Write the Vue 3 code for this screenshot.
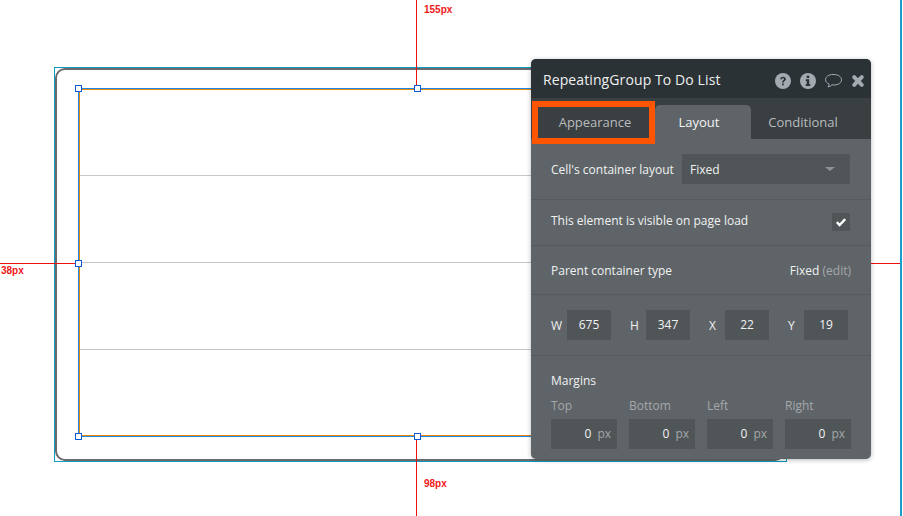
<script setup>
const sizes = [
  { k: 'W', v: '675' },
  { k: 'H', v: '347' },
  { k: 'X', v: '22' },
  { k: 'Y', v: '19' },
]
const margins = ['Top', 'Bottom', 'Left', 'Right']
const handles = [
  [75, 85], [414, 85], [75, 260], [75, 433], [414, 433],
]
const rowLines = [175, 262, 349]
</script>

<template>
  <div class="canvas">
    <div class="bounds"></div>
    <div class="group"></div>
    <div class="selection"></div>
    <div v-for="y in rowLines" :key="y" class="rowline" :style="{ top: y + 'px' }"></div>

    <div class="guide g-top"></div>
    <div class="guide g-bottom"></div>
    <div class="guide g-left"></div>
    <div class="guide g-right"></div>
    <div class="edge"></div>
    <span class="dist d-top">155px</span>
    <span class="dist d-bottom">98px</span>
    <span class="dist d-left">38px</span>

    <div
      v-for="h in handles"
      :key="h.join()"
      class="handle"
      :style="{ left: h[0] + 'px', top: h[1] + 'px' }"
    ></div>

    <section class="panel">
      <header class="head">
        <span class="title">RepeatingGroup To Do List</span>
        <div class="icons">
          <svg width="16" height="16" viewBox="0 0 16 16">
            <circle cx="8" cy="8" r="8" fill="#a3abb0" />
            <path d="M5.2 6.2C5.3 4.6 6.5 3.7 8 3.7c1.6 0 2.9 1 2.9 2.4 0 1.2-.8 1.7-1.5 2.2-.5.3-.7.6-.7 1.2H7.1c0-1.2.4-1.8 1.1-2.3.6-.4.9-.7.9-1.1 0-.5-.5-.8-1.1-.8-.7 0-1.1.4-1.2 1H5.200z" fill="#2b3235" />
            <rect x="7.100" y="10.500" width="1.700" height="1.800" fill="#2b3235" />
          </svg>
          <svg width="16" height="16" viewBox="0 0 16 16">
            <circle cx="8" cy="8" r="8" fill="#a3abb0" />
            <rect x="6.700" y="2.700" width="2.500" height="2.300" fill="#2b3235" />
            <path d="M5.700 6.200h3.500v5h1.100v1.700H5.700v-1.700h1v-3.300h-1z" fill="#2b3235" />
          </svg>
          <svg class="bubble" width="18" height="16" viewBox="0 0 18 16">
            <path d="M9 1.500c4.300 0 7.500 2.400 7.500 5.300S13.300 12 9 12c-.7 0-1.400-.1-2-.2-1 1.100-2.400 1.900-4 2.200.7-.9 1.100-1.800 1.200-2.900-2.200-.9-3.700-2.500-3.700-4.300 0-2.900 3.200-5.300 7.500-5.300z" fill="none" stroke="#a3abb0" stroke-width="1" />
          </svg>
          <svg width="14" height="14" viewBox="0 0 14 14">
            <path d="M3.200 3.200l7.600 7.600M10.800 3.200l-7.600 7.600" stroke="#a3abb0" stroke-width="4" stroke-linecap="round" fill="none" />
          </svg>
        </div>
      </header>

      <nav class="tabs">
        <div class="tab t-appearance">Appearance</div>
        <div class="tab active">Layout</div>
        <div class="tab t-conditional">Conditional</div>
      </nav>

      <div class="row r-layout">
        <span>Cell's container layout</span>
        <div class="select">
          <span class="select-text">Fixed</span>
          <i class="caret"></i>
        </div>
      </div>

      <div class="row r-visible">
        <span class="visible-text">This element is visible on page load</span>
        <div class="check">
          <svg width="12" height="10" viewBox="0 0 12 10">
            <path d="M1.800 5.200l2.800 2.800 5.600-5.800" fill="none" stroke="#fff" stroke-width="2.400" />
          </svg>
        </div>
      </div>

      <div class="row r-parent">
        <span>Parent container type</span>
        <span>Fixed <em>(edit)</em></span>
      </div>

      <div class="row r-size">
        <div v-for="s in sizes" :key="s.k" class="size">
          <label>{{ s.k }}</label>
          <div class="box">{{ s.v }}</div>
        </div>
      </div>

      <div class="margins">
        <div class="m-title">Margins</div>
        <div class="m-grid">
          <div v-for="m in margins" :key="m" class="m-cell">
            <div class="m-label">{{ m }}</div>
            <div class="m-box">0 <em>px</em></div>
          </div>
        </div>
      </div>
    </section>

    <div class="highlight"></div>
  </div>
</template>

<style>
html, body { margin: 0; background: #fff; }
</style>

<style scoped>
.canvas {
  position: relative;
  width: 903px;
  height: 516px;
  overflow: hidden;
  background: #fff;
  font-family: "Open Sans", sans-serif;
}
.bounds {
  position: absolute;
  left: 54px;
  top: 67px;
  width: 731px;
  height: 393px;
  border: 1px solid #0e9bc4;
}
.group {
  position: absolute;
  left: 55px;
  top: 68px;
  width: 726px;
  height: 389px;
  border: 2px solid #6b6b6b;
  border-radius: 10px;
}
.selection {
  position: absolute;
  left: 78px;
  top: 88px;
  width: 680px;
  height: 347px;
  border: 1px solid #1e88e5;
  box-shadow: inset 0 0 0 1px #e8890c;
}
.rowline {
  position: absolute;
  left: 80px;
  width: 460px;
  height: 1px;
  background: #c6c6c6;
}
.guide { position: absolute; background: #e81010; }
.g-top { left: 416px; top: 0; width: 1px; height: 86px; }
.g-bottom { left: 416px; top: 439px; width: 1px; height: 77px; }
.g-left { left: 0; top: 263px; width: 76px; height: 1px; }
.g-right { left: 871px; top: 263px; width: 29px; height: 1px; }
.edge {
  position: absolute;
  left: 900px;
  top: 0;
  width: 2px;
  height: 516px;
  background: #1a9bc8;
}
.dist {
  position: absolute;
  font: bold 10px/12px "Liberation Sans", Arial, sans-serif;
  color: #f01818;
}
.d-top { left: 424px; top: 4px; }
.d-bottom { left: 424px; top: 478px; }
.d-left { left: 1px; top: 265px; }
.handle {
  position: absolute;
  box-sizing: border-box;
  width: 7px;
  height: 7px;
  background: #fff;
  border: 1px solid #0b5bd3;
}
.panel {
  position: absolute;
  left: 531px;
  top: 59px;
  width: 340px;
  height: 400px;
  display: flex;
  flex-direction: column;
  border-radius: 5px;
  overflow: hidden;
  background: #5f6468;
  box-shadow: 0 1px 5px rgba(0, 0, 0, 0.28);
  color: #f0f2f2;
  font-size: 12px;
}
.head {
  height: 39px;
  flex: none;
  display: flex;
  align-items: center;
  justify-content: space-between;
  background: #2b3235;
  padding: 4px 6px 0 12px;
  box-sizing: border-box;
}
.title { font-size: 14px; letter-spacing: 0.1px; color: #eef0f0; margin-top: -2px; }
.icons { display: flex; align-items: center; gap: 9px; }
.bubble { margin-right: -1px; }
.tabs {
  height: 41px;
  flex: none;
  display: flex;
  align-items: flex-end;
  background: #3a3f42;
  font-size: 13px;
}
.tab {
  height: 34px;
  line-height: 35px;
  text-align: center;
  color: #b8bcbe;
}
.t-appearance { width: 124px; padding-left: 4px; box-sizing: border-box; }
.active {
  width: 96px;
  box-sizing: border-box;
  padding-right: 8px;
  background: #5f6468;
  color: #f4f5f5;
  border-radius: 5px 5px 0 0;
}
.t-conditional { width: 120px; box-sizing: border-box; padding-right: 16px; }
.row {
  flex: none;
  display: flex;
  align-items: center;
  justify-content: space-between;
  box-sizing: border-box;
  padding: 0 21px 0 20px;
  border-bottom: 1px solid #565b5f;
}
.r-layout { height: 61px; }
.r-visible { height: 46px; padding-bottom: 2px; }
.visible-text { margin-bottom: 2px; }
.r-parent { height: 49px; padding-right: 20px; }
.r-size { height: 61px; justify-content: flex-start; padding-right: 0; }
.select {
  width: 168px;
  height: 30px;
  box-sizing: border-box;
  padding: 0 15px 0 8px;
  display: flex;
  align-items: center;
  justify-content: space-between;
  background: #505558;
}
.select-text { margin-top: 1px; }
.caret {
  width: 0;
  height: 0;
  border: 4px solid transparent;
  border-top: 4px solid #8e9396;
  border-bottom: 0;
  border-left-width: 5px;
  border-right-width: 5px;
}
.check {
  width: 18px;
  height: 18px;
  display: flex;
  align-items: center;
  justify-content: center;
  background: #505558;
}
em { font-style: normal; color: #a4a8ab; }
.size {
  width: 79px;
  display: flex;
  align-items: center;
}
.size label { width: 16px; }
.box {
  width: 44px;
  height: 30px;
  line-height: 30px;
  text-align: center;
  background: #505558;
}
.margins { padding: 16px 20px 0; }
.m-title { line-height: 18px; }
.m-grid {
  margin-top: 8px;
  display: grid;
  grid-template-columns: repeat(4, 66px);
  column-gap: 12px;
}
.m-label { line-height: 16px; color: #a4a8ab; }
.m-box {
  margin-top: 5px;
  height: 30px;
  line-height: 30px;
  box-sizing: border-box;
  padding-right: 6px;
  text-align: right;
  background: #505558;
}
.m-box em { margin-left: 3px; }
.highlight {
  position: absolute;
  left: 532px;
  top: 101px;
  width: 123px;
  height: 43px;
  box-sizing: border-box;
  border: 6px solid #ff5400;
}
</style>
